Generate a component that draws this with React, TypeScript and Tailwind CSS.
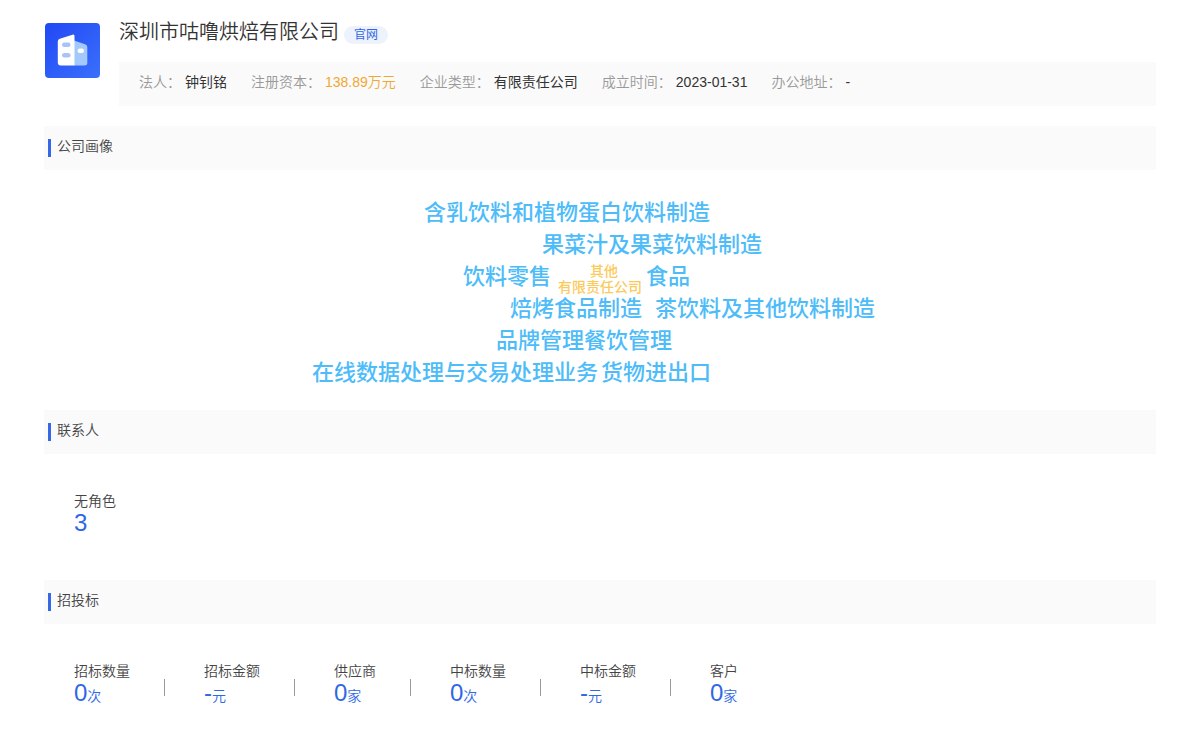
import React from "react";

type Fact = { label: string; value: string; highlight?: boolean };
type Word = { text: string; place: string; small?: boolean };
type Stat = { label: string; value: string; unit?: string };

const facts: Fact[] = [
  { label: "法人", value: "钟钊铭" },
  { label: "注册资本", value: "138.89万元", highlight: true },
  { label: "企业类型", value: "有限责任公司" },
  { label: "成立时间", value: "2023-01-31" },
  { label: "办公地址", value: "-" },
];

const words: Word[] = [
  { text: "含乳饮料和植物蛋白饮料制造", place: "left-[124px] top-[7px]" },
  { text: "果菜汁及果菜饮料制造", place: "left-[242px] top-[39px]" },
  { text: "饮料零售", place: "left-[163px] top-[71px]" },
  { text: "其他", place: "left-[290px] top-[73px]", small: true },
  { text: "有限责任公司", place: "left-[258px] top-[89px]", small: true },
  { text: "食品", place: "left-[346px] top-[71px]" },
  { text: "焙烤食品制造", place: "left-[210px] top-[103px]" },
  { text: "茶饮料及其他饮料制造", place: "left-[355px] top-[103px]" },
  { text: "品牌管理", place: "left-[196px] top-[135px]" },
  { text: "餐饮管理", place: "left-[284px] top-[135px]" },
  { text: "在线数据处理与交易处理业务", place: "left-[12px] top-[167px]" },
  { text: "货物进出口", place: "left-[301px] top-[167px]" },
];

const contacts: Stat[] = [{ label: "无角色", value: "3" }];

const bids: Stat[] = [
  { label: "招标数量", value: "0", unit: "次" },
  { label: "招标金额", value: "-", unit: "元" },
  { label: "供应商", value: "0", unit: "家" },
  { label: "中标数量", value: "0", unit: "次" },
  { label: "中标金额", value: "-", unit: "元" },
  { label: "客户", value: "0", unit: "家" },
];

function CompanyLogo() {
  return (
    <svg viewBox="0 0 56 56" className="mt-px size-14 shrink-0" aria-hidden="true">
      <defs>
        <linearGradient id="logo-bg" x1="0" y1="0" x2="1" y2="1">
          <stop offset="0" stopColor="#2148f5" />
          <stop offset="1" stopColor="#3a70fb" />
        </linearGradient>
      </defs>
      <rect x="1" y="1" width="55" height="55" rx="4" fill="url(#logo-bg)" />
      <path d="M30 18.5 41 22.3Q43.3 23 43.3 25V41Q43.3 43.5 40.3 43.5H30Z" fill="#a3c8fb" />
      <path d="M15.8 16.7 28.5 12.7Q30.5 12.1 30.5 14.1V43.5H16.8Q13.8 43.5 13.8 40.5V19.3Q13.8 17.3 15.8 16.7Z" fill="#fff" />
      <rect x="18" y="20.5" width="8.5" height="4.6" rx="2.3" fill="#a9c3f8" />
      <rect x="18" y="31" width="8.5" height="4.6" rx="2.3" fill="#a9c3f8" />
      <rect x="33.5" y="26.5" width="6.5" height="4.4" rx="2.2" fill="#fff" />
    </svg>
  );
}

function SectionHeader({ title }: { title: string }) {
  return (
    <div className="flex h-11 items-start bg-[#fafafa] pl-1 pt-[13px]">
      <span className="h-[18px] w-[3px] bg-[#3568e8]" />
      <h2 className="ml-1.5 text-sm leading-[14px] font-[350] text-[#444]">{title}</h2>
    </div>
  );
}

function StatList({ items }: { items: Stat[] }) {
  return (
    <dl className="flex flex-wrap pl-[30px] pt-10">
      {items.map((item, i) => (
        <div key={item.label} className="flex">
          <div>
            <dt className="text-sm leading-[14px] font-[350] text-[#444]">{item.label}</dt>
            <dd className="pt-px leading-7 text-[#2f67e6]">
              <span className="text-2xl leading-7">{item.value}</span>
              {item.unit && <span className="text-sm leading-7 font-[350]">{item.unit}</span>}
            </dd>
          </div>
          {i < items.length - 1 && <span className="ml-[34px] mr-[39px] mt-[15px] h-[17px] w-px bg-[#999]" />}
        </div>
      ))}
    </dl>
  );
}

export default function App() {
  return (
    <main className="min-h-screen bg-white px-11 pt-[21px] pb-8 font-['Liberation_Sans','Noto_Sans_CJK_SC',sans-serif] text-[#333]">
      <header className="flex gap-[19px]">
        <CompanyLogo />
        <div className="min-w-0 flex-1">
          <div className="flex h-[41px] items-start gap-[5px]">
            <h1 className="text-xl leading-[22px] font-[350] text-[#333]">深圳市咕噜烘焙有限公司</h1>
            <a
              href="#website"
              className="mt-[5px] rounded-full bg-[#edf2fc] px-2.5 text-xs leading-[18px] text-[#2f67e6]"
            >
              官网
            </a>
          </div>
          <dl className="flex min-h-11 flex-wrap items-center gap-x-6 bg-[#fafafa] px-5 pb-1 text-sm leading-5">
            {facts.map((fact) => (
              <div key={fact.label} className="flex gap-1">
                <dt className="font-[350] text-[#999]">{fact.label}：</dt>
                <dd className={fact.highlight ? "font-[350] text-[#f0a832]" : "text-[#333]"}>{fact.value}</dd>
              </div>
            ))}
          </dl>
        </div>
      </header>

      <section className="mt-5">
        <SectionHeader title="公司画像" />
        <div className="flex h-60 justify-center pt-5">
          <div className="relative h-[200px] w-[600px]">
            {words.map((word) => (
              <span
                key={word.text}
                className={`absolute whitespace-nowrap font-medium ${word.place} ${
                  word.small ? "text-sm leading-4 text-[#fbca5c]" : "text-[22px] leading-8 text-[#4dbcf9]"
                }`}
              >
                {word.text}
              </span>
            ))}
          </div>
        </div>
      </section>

      <section className="h-[170px]">
        <SectionHeader title="联系人" />
        <StatList items={contacts} />
      </section>

      <section>
        <SectionHeader title="招投标" />
        <StatList items={bids} />
      </section>
    </main>
  );
}
